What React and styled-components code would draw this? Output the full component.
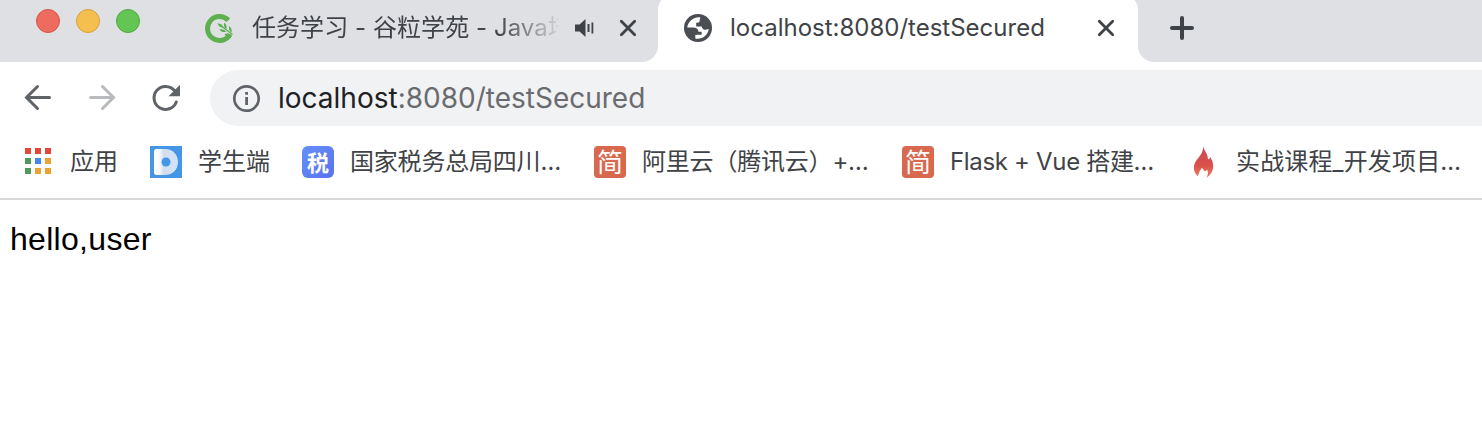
import React from "react";
import styled, { createGlobalStyle } from "styled-components";

const Global = createGlobalStyle`
  * { box-sizing: border-box; }
  body { margin: 0; background: #fff; overflow: hidden; }
`;

const Window = styled.div`
  width: 100%;
  height: 426px;
  overflow: hidden;
  background: #fff;
  color: #3f4246;
  font-family: Inter, "Noto Sans CJK SC", sans-serif;
  svg { display: block; flex: none; }
`;

const TabStrip = styled.div`
  display: flex;
  height: 62px;
  overflow: hidden;
`;

const InactiveArea = styled.div`
  display: flex;
  flex: none;
  width: 658px;
  height: 62px;
  padding-left: 36px;
  background: #dfe0e4;
  border-bottom-right-radius: 16px;
`;

const TrafficLights = styled.div`
  display: flex;
  gap: 16px;
  padding-top: 9px;
  width: 168px;
`;

const Light = styled.span`
  width: 24px;
  height: 24px;
  border-radius: 50%;
  background: ${(p) => p.$fill};
  border: 1px solid ${(p) => p.$edge};
`;

const InactiveTab = styled.div`
  display: flex;
  align-items: center;
  height: 56px;
`;

const TabTitle = styled.div`
  flex: none;
  width: ${(p) => p.$width}px;
  margin-left: ${(p) => p.$left}px;
  overflow: hidden;
  white-space: nowrap;
  font-size: 24px;
  line-height: 36px;
  letter-spacing: ${(p) => p.$spacing || 0}px;
  ${(p) => p.$fade && "mask-image: linear-gradient(to right, #000 80%, transparent 102%);"}
`;

const Gap = styled.span`
  flex: none;
  width: ${(p) => p.$w}px;
`;

const ActiveSlot = styled.div`
  flex: none;
  width: 480px;
  background: linear-gradient(#dfe0e4 16px, #fff 16px);
`;

const ActiveTab = styled.div`
  display: flex;
  align-items: center;
  height: 68px;
  margin-top: -6px;
  padding: 0 0 0 26px;
  background: #fff;
  border-radius: 16px 16px 0 0;
`;

const NewTabArea = styled.div`
  display: flex;
  align-items: center;
  flex: 1;
  padding: 0 0 6px 32px;
  background: #dfe0e4;
  border-bottom-left-radius: 16px;
`;

const Toolbar = styled.div`
  display: flex;
  align-items: center;
  height: 72px;
  padding-left: 22px;
`;

const NavButtons = styled.div`
  display: flex;
  gap: 32px;
  width: 188px;
`;

const AddressBar = styled.div`
  display: flex;
  align-items: center;
  flex: 1;
  height: 56px;
  padding-left: 22px;
  background: #f1f2f4;
  border-radius: 28px 0 0 28px;
`;

const Url = styled.div`
  margin-left: 17px;
  white-space: nowrap;
  font-size: 28px;
  line-height: 40px;
  color: #6a6b6e;
`;

const Host = styled.span`
  color: #202124;
`;

const BookmarksBar = styled.div`
  display: flex;
  height: 66px;
  padding: 8px 0 0 22px;
  border-bottom: 2px solid #d9d9db;
`;

const Bookmark = styled.div`
  display: flex;
  align-items: center;
  gap: 16px;
  flex: none;
  width: ${(p) => p.$width}px;
  height: 40px;
`;

const BookmarkLabel = styled.span`
  white-space: nowrap;
  font-size: 24px;
  line-height: 36px;
  letter-spacing: ${(p) => p.$spacing || 0}px;
`;

const GlyphIcon = styled.span`
  display: flex;
  align-items: center;
  justify-content: center;
  flex: none;
  width: 32px;
  height: 32px;
  border-radius: ${(p) => p.$radius}px;
  background: ${(p) => p.$bg};
  color: #fff;
  font-family: "Noto Sans CJK SC", sans-serif;
  font-size: ${(p) => p.$size}px;
  font-weight: ${(p) => p.$weight};
  line-height: 30px;
  padding-bottom: 2px;
`;

const Page = styled.main`
  padding: 19px 10px;
  color: #000;
  font-family: "Liberation Sans", Arial, sans-serif;
  font-size: 32px;
  line-height: 40px;
  letter-spacing: 0.3px;
`;

const LeafLogo = () => (
  <svg width="32" height="32" viewBox="0 0 32 32" fill="none">
    <path d="M24.300 8.300A12 12 0 1 0 26 22.500" stroke="#5daf50" strokeWidth="5" />
    <path d="M13.500 11.300c3.700.2 5.200 1.600 5.700 4.300-3.200-.2-4.900-1.500-5.700-4.300Z" fill="#5daf50" />
    <path d="M20.300 10.800c2.200 1.700 2.800 3.600 2 6.200-2.300-1.500-2.900-3.600-2-6.200Z" fill="#5daf50" />
    <path d="M15.500 17.500c3-.8 5 .1 6.800 2.300-2.900.8-5.200 0-6.800-2.300Z" fill="#5daf50" />
    <path d="M25.200 14c2.200 1.800 2.800 3.800 2.300 6.500-2.300-1.500-3-3.600-2.300-6.500Z" fill="#5daf50" />
    <path d="m18 14.500 10.500 8" stroke="#5daf50" strokeWidth="1.300" />
    <path d="M20.500 22c3-1 5-.5 7 1.300l-1 2.500c-2.600 0-4.500-1.300-6-3.800Z" fill="#5daf50" />
  </svg>
);

const Speaker = () => (
  <svg width="20" height="20" viewBox="0 0 20 20" fill="#3f4246">
    <path d="M0 6.500h4.500L10.500 1v18L4.500 13.500H0Z" />
    <path d="M12.500 6h2v8h-2ZM16.500 4.500h1.800v11h-1.800Z" />
  </svg>
);

const Close = () => (
  <svg width="18" height="18" viewBox="0 0 18 18" stroke="#3f4246" strokeWidth="2.800" strokeLinecap="round">
    <path d="m2.300 2.300 13.400 13.400M15.700 2.300 2.300 15.700" />
  </svg>
);

const Globe = () => (
  <svg width="28" height="28" viewBox="0 0 28 28">
    <circle cx="14" cy="14" r="14" fill="#4b4d54" />
    <path
      d="M16 3.200C9.500 2.700 4 7.500 3.200 13.600H9c3.500 0 5.300 1.200 5.500 4.200h3.200v2.700c-1.500.5-3.200.3-6.400.4v3.600c6.500 1.300 12.700-3 13.400-9.500-1.500-.2-2 .9-3.700.8-2-.1-2.800-1.500-3.300-3.300h-5.500V8.800c3 .2 4-1 3.300-3 .8-.7 1-1.500.5-2.600Z"
      fill="#fff"
    />
  </svg>
);

const Plus = () => (
  <svg width="24" height="24" viewBox="0 0 24 24" stroke="#3f4246" strokeWidth="4" strokeLinecap="round">
    <path d="M12 2v20M2 12h20" />
  </svg>
);

const Arrow = ({ forward }) => (
  <svg
    width="32"
    height="32"
    viewBox="0 0 32 32"
    fill="none"
    stroke={forward ? "#b9babd" : "#5f6368"}
    strokeWidth="3"
    strokeLinecap="round"
  >
    <path d={forward ? "M4.500 15.500h23M16.500 4.500l11 11-11 11" : "M27.500 15.500h-23M15.500 4.500l-11 11 11 11"} />
  </svg>
);

const Reload = () => (
  <svg width="32" height="32" viewBox="0 0 32 32" fill="none">
    <path d="M26.300 20a11.500 11.500 0 1 1-1.700-11.200" stroke="#5f6368" strokeWidth="3" strokeLinecap="round" />
    <path d="M30 2.800v11.500H18.500Z" fill="#5f6368" />
  </svg>
);

const Info = () => (
  <svg width="29" height="29" viewBox="0 0 29 29" fill="none">
    <circle cx="14.500" cy="14.500" r="12.200" stroke="#5f6368" strokeWidth="2.700" />
    <path d="M13.200 8h2.800v2.700h-2.800ZM13.200 13h2.800v8h-2.800Z" fill="#5f6368" />
  </svg>
);

const APP_COLORS = ["#e2473a", "#e2473a", "#e2473a", "#51995a", "#4587f0", "#e8a333", "#51995a", "#e8a333", "#e8a333"];

const Apps = () => (
  <svg width="32" height="32" viewBox="0 0 32 32">
    {APP_COLORS.map((color, i) => (
      <rect key={i} x={3 + (i % 3) * 10} y={2 + Math.floor(i / 3) * 10} width="6" height="6" fill={color} />
    ))}
  </svg>
);

const Student = () => (
  <svg width="32" height="32" viewBox="0 0 32 32">
    <defs>
      <linearGradient id="student">
        <stop offset="0" stopColor="#fff" />
        <stop offset=".25" stopColor="#f3f6fb" />
        <stop offset=".4" stopColor="#d3dfee" />
        <stop offset="1" stopColor="#d0e4f8" />
      </linearGradient>
    </defs>
    <path d="M0 0h32v32H0Z" fill="#4596e6" />
    <path d="M6.500 3H15c8 0 13 6 13 13s-5 13-13 13H6.500Q4 29 4 26V6q0-3 2.500-3Z" fill="url(#student)" />
    <circle cx="16" cy="16" r="4.500" fill="#4596e6" />
  </svg>
);

const Flame = () => (
  <svg width="32" height="32" viewBox="0 0 32 32">
    <defs>
      <linearGradient id="flame" x2="0" y2="1">
        <stop offset="0" stopColor="#c94a55" />
        <stop offset=".6" stopColor="#d9504b" />
        <stop offset="1" stopColor="#ee8063" />
      </linearGradient>
    </defs>
    <path
      d="M15 0c1 5 5 7.500 4.800 12.500.3 1.500 2 .8 2.400-1.500 4.500 6.500 4.500 15.500-3.700 20.800 2-3.500 1.800-6.500.3-8.300-.7 2-2.800 2.500-3.300.3-1-2-2-2-2.500-.5-1.500 1.500-2 3.500-3 7C5 26 4.500 19.500 9 13.500 12 10 15.500 6 15 0Z"
      fill="url(#flame)"
    />
  </svg>
);

const JianIcon = () => (
  <GlyphIcon $bg="#d8684e" $radius={4} $size={26} $weight={400}>简</GlyphIcon>
);

const BOOKMARKS = [
  { label: "应用", width: 128, icon: <Apps /> },
  { label: "学生端", width: 152, icon: <Student /> },
  {
    label: "国家税务总局四川…",
    width: 292,
    spacing: -0.2,
    icon: (
      <GlyphIcon $bg="linear-gradient(135deg, #6590f8, #5872ee)" $radius={6} $size={22} $weight={700}>税</GlyphIcon>
    ),
  },
  { label: "阿里云（腾讯云）+…", width: 308, spacing: -0.2, icon: <JianIcon /> },
  { label: "Flask + Vue 搭建…", width: 286, spacing: -0.33, icon: <JianIcon /> },
  { label: "实战课程_开发项目…", width: 280, spacing: 0.15, icon: <Flame /> },
];

export default function App() {
  return (
    <Window>
      <Global />
      <TabStrip>
        <InactiveArea>
          <TrafficLights>
            <Light $fill="#ed6b5f" $edge="#d65548" />
            <Light $fill="#f5bf4f" $edge="#d9a03c" />
            <Light $fill="#62c554" $edge="#4faa3c" />
          </TrafficLights>
          <InactiveTab>
            <LeafLogo />
            <TabTitle $left={16} $width={306} $spacing={0.06} $fade>任务学习 - 谷粒学苑 - Java培</TabTitle>
            <Gap $w={17} />
            <Speaker />
            <Gap $w={24} />
            <Close />
          </InactiveTab>
        </InactiveArea>
        <ActiveSlot>
          <ActiveTab>
            <Globe />
            <TabTitle $left={18} $width={350}>localhost:8080/testSecured</TabTitle>
            <Gap $w={17} />
            <Close />
          </ActiveTab>
        </ActiveSlot>
        <NewTabArea>
          <Plus />
        </NewTabArea>
      </TabStrip>
      <Toolbar>
        <NavButtons>
          <Arrow />
          <Arrow forward />
          <Reload />
        </NavButtons>
        <AddressBar>
          <Info />
          <Url>
            <Host>localhost</Host>:8080/testSecured
          </Url>
        </AddressBar>
      </Toolbar>
      <BookmarksBar>
        {BOOKMARKS.map((b) => (
          <Bookmark key={b.label} $width={b.width}>
            {b.icon}
            <BookmarkLabel $spacing={b.spacing}>{b.label}</BookmarkLabel>
          </Bookmark>
        ))}
      </BookmarksBar>
      <Page>hello,user</Page>
    </Window>
  );
}
